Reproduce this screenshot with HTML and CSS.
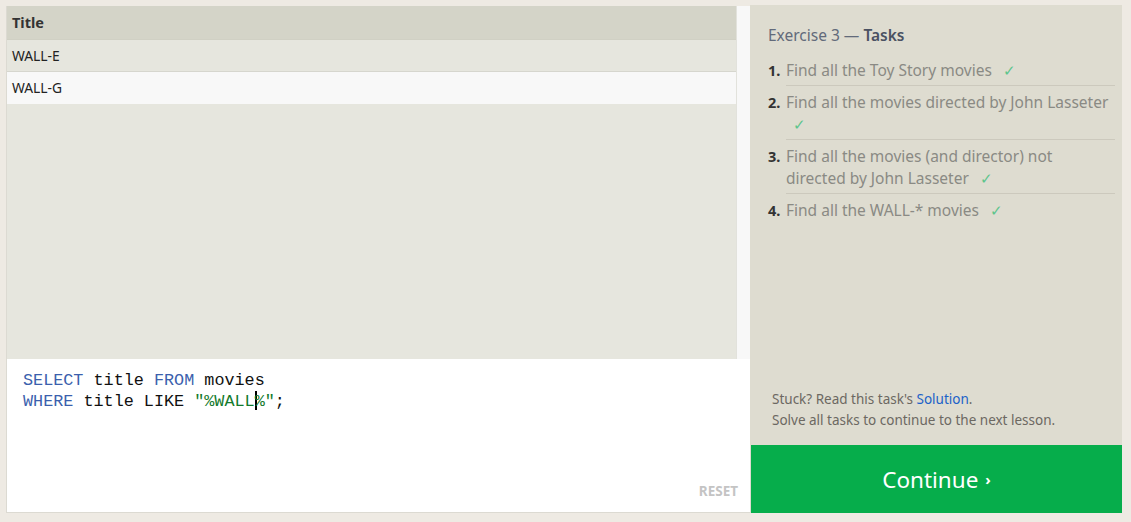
FILE: index.html
```html
<!DOCTYPE html>
<html>
<head>
<meta charset="utf-8">
<link rel="stylesheet" href="styles.css">
</head>
<body>
<div class="app">
  <div class="left">
    <div class="results">
      <div class="table">
        <div class="thead">Title</div>
        <div class="row">WALL-E</div>
        <div class="row alt">WALL-G</div>
      </div>
      <div class="scrollbar"></div>
    </div>
    <div class="editor">
      <div class="code"><span class="kw">SELECT</span> title <span class="kw">FROM</span> movies</div>
      <div class="code"><span class="kw">WHERE</span> title LIKE <span class="str">"%WALL<span class="caret"></span>%"</span>;</div>
      <div class="reset">RESET</div>
    </div>
  </div>
  <div class="right">
    <div class="tasks">
      <h2 class="heading"><span class="ex">Exercise 3 — </span>Tasks</h2>
      <ol class="list">
        <li><span class="num">1.</span><span class="txt">Find all the Toy Story movies <span class="check">✓</span></span></li>
        <li><span class="num">2.</span><span class="txt">Find all the movies directed by John Lasseter <span class="check">✓</span></span></li>
        <li><span class="num">3.</span><span class="txt">Find all the movies (and director) not directed by John Lasseter <span class="check">✓</span></span></li>
        <li><span class="num">4.</span><span class="txt">Find all the WALL-* movies <span class="check">✓</span></span></li>
      </ol>
    </div>
    <div class="footer">
      <p>Stuck? Read this task's <a class="link">Solution</a>.</p>
      <p>Solve all tasks to continue to the next lesson.</p>
    </div>
    <div class="continue">Continue <span class="arrow">›</span></div>
  </div>
</div>
</body>
</html>
```
FILE: styles.css
```css
html, body {
  margin: 0;
  padding: 0;
  background: #eeeae3;
  font-family: "Noto Sans", Lato, sans-serif;
}
.app {
  display: flex;
  padding: 5px 9px 9px 6px;
  height: 508px;
  box-sizing: content-box;
}
.left {
  width: 744px;
  display: flex;
  flex-direction: column;
  padding-top: 1px;
}
.results {
  height: 353px;
  display: flex;
  background: #e6e6de;
  border-left: 1px solid #dcdad2;
}
.table {
  flex: 1;
}
.thead {
  height: 33px;
  line-height: 33px;
  background: #d4d4c8;
  font-weight: bold;
  font-size: 14.5px;
  color: #333;
  padding-left: 5px;
  border-bottom: 1px solid #d0d0c4;
}
.row {
  height: 31px;
  line-height: 31px;
  font-size: 13.8px;
  color: #222;
  padding-left: 5px;
  border-bottom: 1px solid #d6d6ce;
}
.row.alt {
  background: #f8f8f8;
  border-bottom: none;
  height: 32px;
}
.scrollbar {
  width: 13px;
  background: #f8f8f8;
  border-left: 1px solid #e2e2dc;
}
.editor {
  position: relative;
  flex: 1;
  background: #fff;
  border-left: 1px solid #dcdad2;
  border-bottom: 1px solid #dcdad2;
  padding: 12px 0 0 16px;
}
.code {
  font-family: "Liberation Mono", "Courier New", monospace;
  font-size: 16.8px;
  line-height: 20px;
  color: #111;
  white-space: pre;
}
.kw { color: #3b5fad; }
.str { color: #137a2c; }
.caret {
  display: inline-block;
  width: 2px;
  height: 19px;
  background: #000;
  vertical-align: -4px;
  margin-right: -2px;
}
.reset {
  position: absolute;
  right: 12px;
  bottom: 12px;
  font-size: 13.5px;
  font-weight: bold;
  color: #c4c4c4;
}
.right {
  width: 372px;
  background: #dedcd0;
  display: flex;
  flex-direction: column;
}
.tasks {
  flex: 1;
  padding: 18px 7px 0 18px;
}
.heading {
  margin: 0 0 12px;
  font-size: 15.5px;
  font-weight: 600;
  color: #4a5162;
  line-height: 24px;
}
.heading .ex {
  font-weight: normal;
  color: #626a7a;
}
.list {
  list-style: none;
  margin: 0;
  padding: 0;
}
.list li {
  display: flex;
  font-size: 15.5px;
  line-height: 22px;
}
.num {
  width: 18px;
  flex: none;
  font-weight: bold;
  font-size: 14.5px;
  color: #333;
}
.txt {
  flex: 1;
  color: #8a8a84;
  padding: 5px 0 4px;
  border-bottom: 1px solid #ccc9bd;
}
.list li:first-child .txt { padding-top: 0; }
.list li .num { padding-top: 5px; }
.list li:first-child .num { padding-top: 0; }
.list li:last-child .txt { border-bottom: none; }
.check {
  color: #5cc58c;
  margin-left: 7px;
  font-size: 15px;
  line-height: 1;
}
.footer {
  padding: 0 10px 14px 22px;
  font-size: 13.5px;
  line-height: 21px;
  color: #6c6862;
}
.footer p { margin: 0; }
.link { color: #1b62c8; }
.continue {
  height: 68px;
  margin-left: 1px;
  background: #06ad4b;
  color: #fff;
  font-size: 22.5px;
  display: flex;
  align-items: center;
  justify-content: center;
}
.arrow {
  font-size: 15px;
  margin-left: 7px;
  font-weight: bold;
}
```
